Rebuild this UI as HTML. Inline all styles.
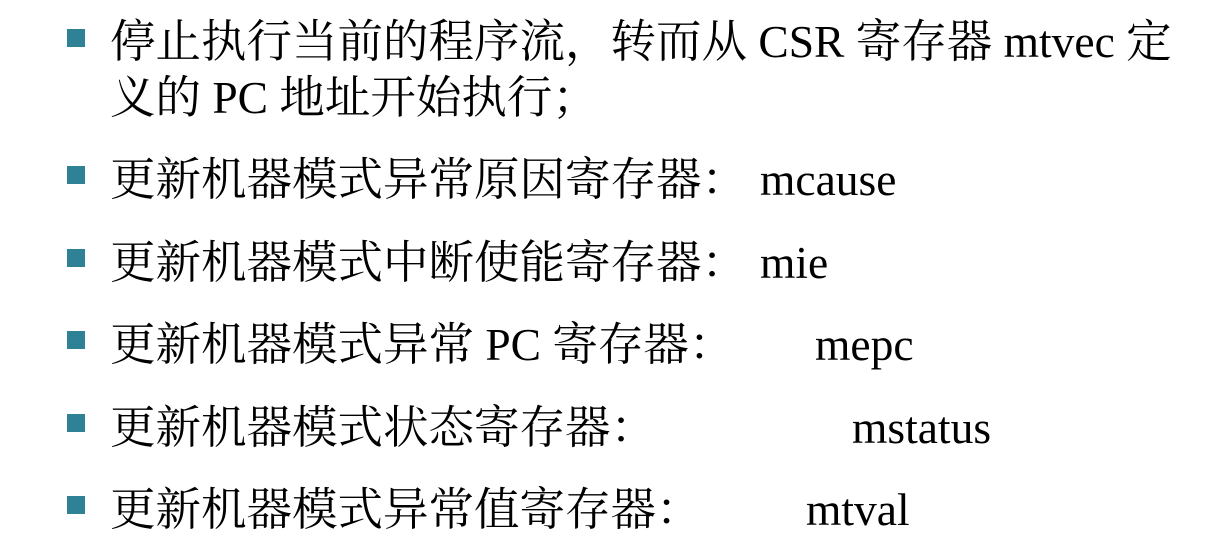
<!DOCTYPE html>
<html><head><meta charset="utf-8"><style>
body{margin:0;width:1210px;height:551px;background:#fff;position:relative;overflow:hidden;font-family:"Liberation Serif","Noto Serif CJK SC","Noto Serif CJK JP",serif;color:#000;}
.t{position:absolute;left:110px;font-size:45.5px;line-height:46px;white-space:nowrap;}
.b{position:absolute;left:67px;width:18px;height:18px;background:#2f8296;}
.e{position:absolute;font-size:45.5px;line-height:46px;white-space:nowrap;}
</style></head><body>
<div class="b" style="top:29px"></div>
<div class="t" style="top:19px">停止执行当前的程序流，转而从 CSR 寄存器 mtvec 定</div>
<div class="t" style="top:75px">义的 PC 地址开始执行；</div>
<div class="b" style="top:166px"></div>
<div class="t" style="top:157px">更新机器模式异常原因寄存器：</div><div class="e" style="left:760px;top:157px">mcause</div>
<div class="b" style="top:249px"></div>
<div class="t" style="top:240px">更新机器模式中断使能寄存器：</div><div class="e" style="left:760px;top:240px">mie</div>
<div class="b" style="top:331px"></div>
<div class="t" style="top:322px">更新机器模式异常 PC 寄存器：</div><div class="e" style="left:815px;top:322px">mepc</div>
<div class="b" style="top:414px"></div>
<div class="t" style="top:405px">更新机器模式状态寄存器：</div><div class="e" style="left:852px;top:405px">mstatus</div>
<div class="b" style="top:496px"></div>
<div class="t" style="top:487px">更新机器模式异常值寄存器：</div><div class="e" style="left:806px;top:487px">mtval</div>
</body></html>
